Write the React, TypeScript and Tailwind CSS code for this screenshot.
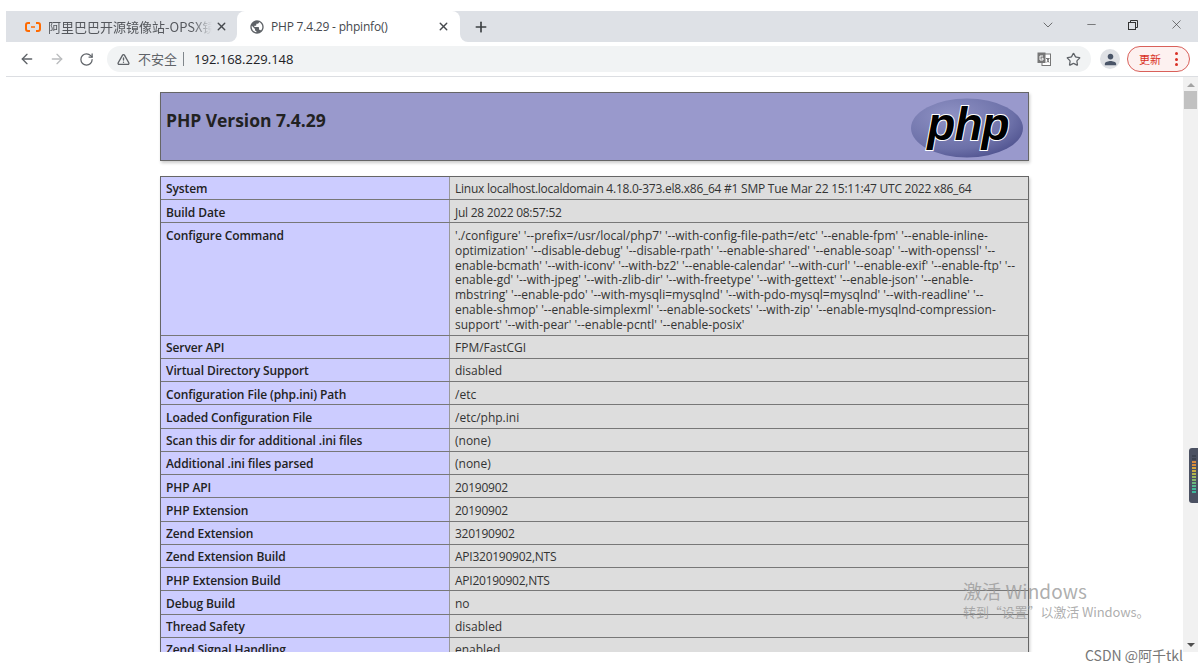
import { ArrowLeft, ArrowRight, ChevronDown, Minus, Plus, RotateCw, Star, TriangleAlert, X } from "lucide-react";
import { MdPerson, MdPublic } from "react-icons/md";

const configure = [
  "'./configure' '--prefix=/usr/local/php7' '--with-config-file-path=/etc' '--enable-fpm' '--enable-inline-",
  "optimization' '--disable-debug' '--disable-rpath' '--enable-shared' '--enable-soap' '--with-openssl' '--",
  "enable-bcmath' '--with-iconv' '--with-bz2' '--enable-calendar' '--with-curl' '--enable-exif' '--enable-ftp' '--",
  "enable-gd' '--with-jpeg' '--with-zlib-dir' '--with-freetype' '--with-gettext' '--enable-json' '--enable-",
  "mbstring' '--enable-pdo' '--with-mysqli=mysqlnd' '--with-pdo-mysql=mysqlnd' '--with-readline' '--",
  "enable-shmop' '--enable-simplexml' '--enable-sockets' '--with-zip' '--enable-mysqlnd-compression-",
  "support' '--with-pear' '--enable-pcntl' '--enable-posix'",
];

const rows = [
  ["System", "Linux localhost.localdomain 4.18.0-373.el8.x86_64 #1 SMP Tue Mar 22 15:11:47 UTC 2022 x86_64"],
  ["Build Date", "Jul 28 2022 08:57:52"],
  ["Configure Command", configure],
  ["Server API", "FPM/FastCGI"],
  ["Virtual Directory Support", "disabled"],
  ["Configuration File (php.ini) Path", "/etc"],
  ["Loaded Configuration File", "/etc/php.ini"],
  ["Scan this dir for additional .ini files", "(none)"],
  ["Additional .ini files parsed", "(none)"],
  ["PHP API", "20190902"],
  ["PHP Extension", "20190902"],
  ["Zend Extension", "320190902"],
  ["Zend Extension Build", "API320190902,NTS"],
  ["PHP Extension Build", "API20190902,NTS"],
  ["Debug Build", "no"],
  ["Thread Safety", "disabled"],
  ["Zend Signal Handling", "enabled"],
] as const;

const PhpLogo = () => (
  <svg width="114" height="62" viewBox="0 0 114 62">
    <defs>
      <radialGradient id="phpBg" cx="35%" cy="30%" r="80%">
        <stop offset="0%" stopColor="#8f92c4" />
        <stop offset="70%" stopColor="#6c70a8" />
        <stop offset="100%" stopColor="#4c4f8c" />
      </radialGradient>
    </defs>
    <ellipse cx="57" cy="31" rx="56" ry="29.5" fill="url(#phpBg)" />
    <text
      x="58"
      y="43"
      textAnchor="middle"
      fontFamily="'Liberation Sans', sans-serif"
      fontWeight="700"
      fontStyle="italic"
      fontSize="46"
      letterSpacing="-1"
      fill="#000"
      stroke="#fff"
      strokeWidth="2"
      paintOrder="stroke"
    >
      php
    </text>
  </svg>
);

const Alibaba = () => (
  <svg width="16" height="10" viewBox="0 0 16 10" fill="none">
    <path d="M5 1H3Q1 1 1 3V7Q1 9 3 9H5M11 1H13Q15 1 15 3V7Q15 9 13 9H11" stroke="#ff6a00" strokeWidth="2" />
    <path d="M6 5H10" stroke="#ff6a00" strokeWidth="1.5" />
  </svg>
);

const Translate = () => (
  <svg width="14" height="14" viewBox="0 0 14 14">
    <rect x="5" y="2" width="8.5" height="11.5" fill="#fff" stroke="#777" />
    <rect x="0.5" y="0.5" width="8" height="10.5" fill="#777" />
    <path d="M6 4H3V8H6V6.2H4.5" fill="none" stroke="#fff" />
    <path d="M9 6.5H12.5M10 6.5L12 10.5M12 6.5L9.8 10.5" fill="none" stroke="#777" />
  </svg>
);

const Restore = () => (
  <svg width="10" height="10" viewBox="0 0 10 10" fill="none" stroke="#333">
    <rect x="0.5" y="2.5" width="7" height="7" />
    <path d="M2.5 2.5V0.5H9.5V7.5H7.5" />
  </svg>
);

const Meter = () => (
  <div className="absolute right-0 top-[371px] flex h-[55px] w-[9px] flex-col items-center gap-px rounded-l-[3px] bg-[#4b5162] pt-[7px]">
    {["#3c4250", "#3c4250", "#d98b3c", "#d98b3c", "#d9a63c", "#c9ad44", "#b5b54c", "#9db85c", "#85b86c", "#6db87c", "#55b88c", "#45b898", "#3db89c"].map(
      (c, i) => (
        <span key={i} className="h-[2px] w-[4px]" style={{ backgroundColor: c }} />
      ),
    )}
  </div>
);

export default function App() {
  return (
    <div className="relative h-[672px] w-[1202px] overflow-hidden bg-white pl-[6px] pr-[4px] pt-[11px] font-['Open_Sans',sans-serif]">
      <div className="flex h-[641px] flex-col">
        {/* tab strip */}
        <div className="flex h-[31px] shrink-0 items-center bg-[#dee1e6]">
          <div className="flex h-full w-[231px] items-center pl-[19px] pr-[8px]">
            <Alibaba />
            <span className="ml-[7px] w-[164px] overflow-hidden whitespace-nowrap text-[13px] leading-[18px] text-[#55585d] font-['Noto_Sans_CJK_SC',sans-serif] [mask-image:linear-gradient(to_right,#000_88%,transparent)]">
              阿里巴巴开源镜像站-OPSX镜像站
            </span>
            <X size={13} strokeWidth={2.5} className="ml-auto mr-[1px] text-[#45484d]" />
          </div>
          <div className="relative flex h-full w-[223px] items-center rounded-t-[8px] bg-white pl-[12px] pr-[8px]">
            <span className="absolute bottom-0 left-[-8px] h-[8px] w-[8px] bg-white">
              <span className="block h-full w-full rounded-br-[8px] bg-[#dee1e6]" />
            </span>
            <span className="absolute bottom-0 right-[-8px] h-[8px] w-[8px] bg-white">
              <span className="block h-full w-full rounded-bl-[8px] bg-[#dee1e6]" />
            </span>
            <MdPublic size={16} className="text-[#5f6368]" />
            <span className="ml-[6px] text-[12px] tracking-[-0.2px] text-[#45484d]">PHP 7.4.29 - phpinfo()</span>
            <X size={13} strokeWidth={2.5} className="ml-auto mr-[2px] text-[#45484d]" />
          </div>
          <Plus size={16} strokeWidth={2.5} className="ml-[13px] text-[#3c4043]" />
          <div className="ml-auto flex items-center pb-[4px]">
            <ChevronDown size={16} strokeWidth={1} className="mr-[29px] text-[#333]" />
            <Minus size={13} strokeWidth={1} className="mr-[30px] text-[#222]" />
            <Restore />
            <X size={15} strokeWidth={1} className="ml-[31px] mr-[14px] text-[#333]" />
          </div>
        </div>

        {/* toolbar */}
        <div className="flex h-[35px] shrink-0 items-center border-b border-[#dcdee2] bg-white">
          <ArrowLeft size={16} className="ml-[13px] text-[#5f6368]" />
          <ArrowRight size={16} className="ml-[14px] text-[#babcbe]" />
          <RotateCw size={15} className="ml-[14px] text-[#5f6368]" />
          <div className="ml-[13px] flex h-[26px] w-[984px] items-center rounded-full bg-[#f1f3f4] pl-[10px] pr-[10px]">
            <TriangleAlert size={13} strokeWidth={2.5} className="text-[#5f6368]" />
            <span className="ml-[8px] text-[13px] text-[#5f6368] font-['Noto_Sans_CJK_SC',sans-serif]">不安全</span>
            <span className="ml-[6px] h-[14px] w-px bg-[#80868b]" />
            <span className="ml-[10px] pt-px text-[13px] text-[#202124]">192.168.229.148</span>
            <span className="ml-auto">
              <Translate />
            </span>
            <Star size={15} className="ml-[15px] text-[#5f6368]" />
          </div>
          <span className="ml-[9px] flex h-[20px] w-[20px] items-center justify-center rounded-full bg-[#dfe1e5]">
            <MdPerson size={17} className="text-[#4a5568]" />
          </span>
          <div className="ml-[7px] flex h-[26px] w-[63px] items-center rounded-full border border-[#d9605a] bg-[#fdf1f0] pl-[11px]">
            <span className="text-[11px] text-[#d93025] font-['Noto_Sans_CJK_SC',sans-serif]">更新</span>
            <span className="ml-[14px] flex flex-col gap-[2.5px]">
              <i className="h-[3px] w-[3px] rounded-full bg-[#d93025]" />
              <i className="h-[3px] w-[3px] rounded-full bg-[#d93025]" />
              <i className="h-[3px] w-[3px] rounded-full bg-[#d93025]" />
            </span>
          </div>
        </div>

        {/* page */}
        <div className="flex min-h-0 flex-1">
          <main className="min-w-0 flex-1 overflow-hidden pt-[15px] text-[12px] leading-[14.85px] text-[#222]">
            <div className="mx-auto flex h-[69px] w-[869px] items-start justify-between border border-[#666] bg-[#9999cc] py-[4px] pl-[5px] pr-[4px] shadow-[1px_2px_3px_#ccc]">
              <h1 className="mt-[12px] text-[17.5px] leading-[22px] font-bold tracking-[-0.05px] text-[#222]">PHP Version 7.4.29</h1>
              <PhpLogo />
            </div>
            <div className="mx-auto mt-[15px] w-[869px] border-x border-t border-[#666] shadow-[1px_2px_3px_#ccc]">
              {rows.map(([label, value]) => (
                <div key={label} className="flex border-b border-[#777]">
                  <div className="w-[289px] shrink-0 border-r border-[#999] bg-[#ccccff] px-[5px] pb-[2px] pt-[5.4px] font-semibold tracking-[-0.1px]">{label}</div>
                  <div className="flex-1 bg-[#dddddd] px-[5px] pb-[2px] pt-[5.4px] whitespace-nowrap text-[#333]">
                    {typeof value === "string" ? (
                      <span className={/\d/.test(value) ? "tracking-[-0.25px]" : ""}>{value}</span>
                    ) : (
                      value.map((line) => <div key={line}>{line}</div>)
                    )}
                  </div>
                </div>
              ))}
            </div>
          </main>

          {/* scrollbar */}
          <div className="relative flex w-[15px] shrink-0 flex-col items-center bg-[#f1f1f1]">
            <span className="mt-[6px] h-0 w-0 border-x-[4px] border-b-[4px] border-x-transparent border-b-[#a3a3a3]" />
            <span className="mt-[4px] h-[18px] w-[13px] bg-[#c1c1c1]" />
            <span className="mt-auto mb-[5px] h-0 w-0 border-x-[4px] border-t-[4px] border-x-transparent border-t-[#505050]" />
            <Meter />
          </div>
        </div>
      </div>

      {/* activation watermark */}
      <div className="absolute left-[963px] top-[578px] text-[#999]/80 font-['Noto_Sans_CJK_SC',sans-serif]">
        <div className="text-[19px] leading-[25px] tracking-[0.1px]">激活 Windows</div>
        <div className="text-[13px] leading-[18px] tracking-[-0.1px]">转到“设置”以激活 Windows。</div>
      </div>
      <div className="absolute left-[1085px] top-[646px] text-[14px] leading-[18px] text-[#777] font-['Noto_Sans_CJK_SC',sans-serif]">CSDN @阿千tkl</div>
    </div>
  );
}
